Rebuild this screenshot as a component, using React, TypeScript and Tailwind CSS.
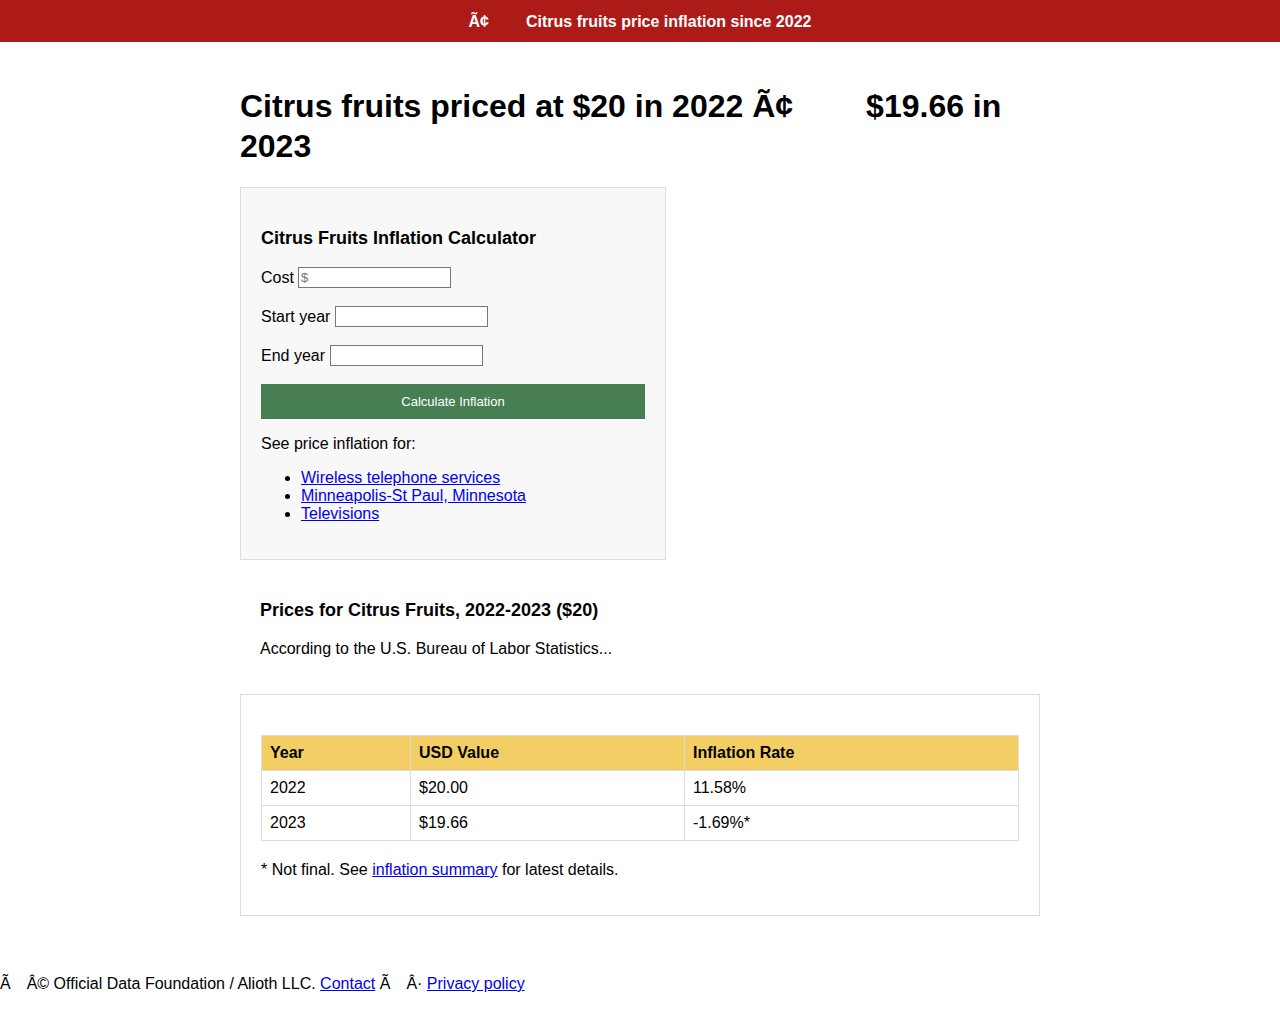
export default function App() {
  const links = ["Wireless telephone services", "Minneapolis-St Paul, Minnesota", "Televisions"];
  const rows = [
    ["2022", "$20.00", "11.58%"],
    ["2023", "$19.66", "-1.69%*"],
  ];

  return (
    <div className="min-h-[1010px] bg-white text-black text-[16px] font-['Liberation_Sans',Arial,sans-serif]">
      <header className="flex h-[42px] items-center justify-center bg-[#ad1b19] pt-[2px] font-bold text-white">
        <span>Ã¢</span>
        <span className="inline-block w-[37px]" />
        <span>Citrus fruits price inflation since 2022</span>
      </header>

      <main className="mx-auto w-[800px]">
        <h1 className="mt-[44px] text-[32px] font-bold leading-[40px]">
          Citrus fruits priced at $20 in 2022 Ã¢<span className="inline-block w-[73px]" />$19.66 in 2023
        </h1>

        <section className="mt-[21px] w-[426px] border border-[#dddddd] bg-[#f8f8f8] px-5 pb-[36px] pt-[40px]">
          <h3 className="text-[18px] font-bold leading-[21px]">Citrus Fruits Inflation Calculator</h3>
          <div className="mt-[18px] flex flex-col gap-[18px] leading-[21px]">
            <label className="flex items-center">
              Cost
              <input
                placeholder="$"
                className="ml-[4px] h-[21px] w-[153px] border border-[#767676] bg-white px-[2px] text-[13px] placeholder:text-[#757575]"
              />
            </label>
            <label className="flex items-center">
              Start year
              <input className="ml-[5px] h-[21px] w-[153px] border border-[#767676] bg-white" />
            </label>
            <label className="flex items-center">
              End year
              <input className="ml-[5px] h-[21px] w-[153px] border border-[#767676] bg-white" />
            </label>
          </div>
          <button className="mt-[18px] h-[35px] w-full bg-[#477f53] text-[13px] text-white">
            Calculate Inflation
          </button>
          <p className="mt-[16px] leading-[18px]">See price inflation for:</p>
          <ul className="mt-[16px] list-disc pl-[40px] leading-[18px]">
            {links.map((l) => (
              <li key={l}>
                <a href="#" className="text-[#0000ee] underline">{l}</a>
              </li>
            ))}
          </ul>
        </section>

        <section className="px-5 pt-[40px]">
          <h2 className="text-[18px] font-bold leading-[21px]">Prices for Citrus Fruits, 2022-2023 ($20)</h2>
          <p className="mt-[19px] leading-[18px]">According to the U.S. Bureau of Labor Statistics...</p>
        </section>

        <section className="mt-[36px] border border-[#dddddd] px-5 pb-[36px] pt-[40px]">
          <table className="w-full border-collapse">
            <thead>
              <tr className="bg-[#f3ce65] text-left">
                <th className="h-[35px] w-[149px] border border-[#dddddd] px-2 font-bold">Year</th>
                <th className="h-[35px] w-[274px] border border-[#dddddd] px-2 font-bold">USD Value</th>
                <th className="h-[35px] border border-[#dddddd] px-2 font-bold">Inflation Rate</th>
              </tr>
            </thead>
            <tbody>
              {rows.map((r) => (
                <tr key={r[0]}>
                  {r.map((c, i) => (
                    <td key={i} className="h-[35px] border border-[#dddddd] px-2">{c}</td>
                  ))}
                </tr>
              ))}
            </tbody>
          </table>
          <p className="mt-[20px] leading-[18px]">
            * Not final. See <a href="#" className="text-[#0000ee] underline">inflation summary</a> for latest details.
          </p>
        </section>
      </main>

      <footer className="mt-[59px] leading-[18px]">
        Ã<span className="inline-block w-[16px]" />Â© Official Data Foundation / Alioth LLC.{" "}
        <a href="#" className="text-[#0000ee] underline">Contact</a> Ã<span className="inline-block w-[16px]" />Â·{" "}
        <a href="#" className="text-[#0000ee] underline">Privacy policy</a>
      </footer>
    </div>
  );
}
